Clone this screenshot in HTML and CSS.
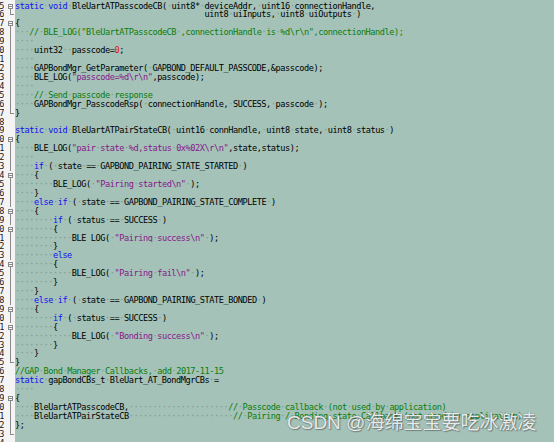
FILE: index.html
```html
<!DOCTYPE html>
<html>
<head>
<meta charset="utf-8">
<link rel="stylesheet" href="styles.css">
</head>
<body>
<div class="editor">
<div class="ln"><span class="no">4</span><span class="fd"></span><span class="cd"></span></div>
<div class="ln"><span class="no">5</span><span class="fd box"></span><span class="cd"><b class="k">static</b><i>·</i><b class="k">void</b><i>·</i>BleUartATPasscodeCB(<i>·</i>uint8*<i>·</i>deviceAddr,<i>·</i>uint16<i>·</i>connectionHandle,</span></div>
<div class="ln"><span class="no">6</span><span class="fd end"></span><span class="cd">                                        uint8<i>·</i>uiInputs,<i>·</i>uint8<i>·</i>uiOutputs<i>·</i>)</span></div>
<div class="ln"><span class="no">7</span><span class="fd box"></span><span class="cd">{</span></div>
<div class="ln"><span class="no">8</span><span class="fd bar"></span><span class="cd"><i>···</i><b class="c">//<i>·</i>BLE_LOG("BleUartATPasscodeCB<i>·</i>,connectionHandle<i>·</i>is<i>·</i>%d\r\n",connectionHandle);</b></span></div>
<div class="ln"><span class="no">9</span><span class="fd bar"></span><span class="cd"><i>····</i></span></div>
<div class="ln"><span class="no">10</span><span class="fd bar"></span><span class="cd"><i>····</i>uint32<i>··</i>passcode=<b class="n">0</b>;</span></div>
<div class="ln"><span class="no">11</span><span class="fd bar"></span><span class="cd"><i>····</i></span></div>
<div class="ln"><span class="no">12</span><span class="fd bar"></span><span class="cd"><i>····</i>GAPBondMgr_GetParameter(<i>·</i>GAPBOND_DEFAULT_PASSCODE,&amp;passcode);</span></div>
<div class="ln"><span class="no">13</span><span class="fd bar"></span><span class="cd"><i>····</i>BLE_LOG(<b class="s">"passcode=%d\r\n"</b>,passcode);</span></div>
<div class="ln"><span class="no">14</span><span class="fd bar"></span><span class="cd"><i>····</i></span></div>
<div class="ln"><span class="no">15</span><span class="fd bar"></span><span class="cd"><i>····</i><b class="c">//<i>·</i>Send<i>·</i>passcode<i>·</i>response</b></span></div>
<div class="ln"><span class="no">16</span><span class="fd bar"></span><span class="cd"><i>····</i>GAPBondMgr_PasscodeRsp(<i>·</i>connectionHandle,<i>·</i>SUCCESS,<i>·</i>passcode<i>·</i>);</span></div>
<div class="ln"><span class="no">17</span><span class="fd end"></span><span class="cd">}</span></div>
<div class="ln"><span class="no">18</span><span class="fd"></span><span class="cd"></span></div>
<div class="ln"><span class="no">19</span><span class="fd"></span><span class="cd"><b class="k">static</b><i>·</i><b class="k">void</b><i>·</i>BleUartATPairStateCB(<i>·</i>uint16<i>·</i>connHandle,<i>·</i>uint8<i>·</i>state,<i>·</i>uint8<i>·</i>status<i>·</i>)</span></div>
<div class="ln"><span class="no">20</span><span class="fd box"></span><span class="cd">{</span></div>
<div class="ln"><span class="no">21</span><span class="fd bar"></span><span class="cd"><i>····</i>BLE_LOG(<b class="s">"pair<i>·</i>state<i>·</i>%d,status<i>·</i>0x%02X\r\n"</b>,state,status);</span></div>
<div class="ln"><span class="no">22</span><span class="fd bar"></span><span class="cd"><i>····</i></span></div>
<div class="ln"><span class="no">23</span><span class="fd bar"></span><span class="cd"><i>····</i><b class="k">if</b><i>·</i>(<i>·</i>state<i>·</i>==<i>·</i>GAPBOND_PAIRING_STATE_STARTED<i>·</i>)</span></div>
<div class="ln"><span class="no">24</span><span class="fd box"></span><span class="cd"><i>····</i>{</span></div>
<div class="ln"><span class="no">25</span><span class="fd bar"></span><span class="cd"><i>········</i>BLE_LOG(<i>·</i><b class="s">"Pairing<i>·</i>started\n"</b><i>·</i>);</span></div>
<div class="ln"><span class="no">26</span><span class="fd bar"></span><span class="cd"><i>····</i>}</span></div>
<div class="ln"><span class="no">27</span><span class="fd bar"></span><span class="cd"><i>····</i><b class="k">else</b><i>·</i><b class="k">if</b><i>·</i>(<i>·</i>state<i>·</i>==<i>·</i>GAPBOND_PAIRING_STATE_COMPLETE<i>·</i>)</span></div>
<div class="ln"><span class="no">28</span><span class="fd box"></span><span class="cd"><i>····</i>{</span></div>
<div class="ln"><span class="no">29</span><span class="fd bar"></span><span class="cd"><i>········</i><b class="k">if</b><i>·</i>(<i>·</i>status<i>·</i>==<i>·</i>SUCCESS<i>·</i>)</span></div>
<div class="ln"><span class="no">30</span><span class="fd box"></span><span class="cd"><i>········</i>{</span></div>
<div class="ln"><span class="no">31</span><span class="fd bar"></span><span class="cd"><i>············</i>BLE_LOG(<i>·</i><b class="s">"Pairing<i>·</i>success\n"</b><i>·</i>);</span></div>
<div class="ln"><span class="no">32</span><span class="fd bar"></span><span class="cd"><i>········</i>}</span></div>
<div class="ln"><span class="no">33</span><span class="fd bar"></span><span class="cd"><i>········</i><b class="k">else</b></span></div>
<div class="ln"><span class="no">34</span><span class="fd box"></span><span class="cd"><i>········</i>{</span></div>
<div class="ln"><span class="no">35</span><span class="fd bar"></span><span class="cd"><i>············</i>BLE_LOG(<i>·</i><b class="s">"Pairing<i>·</i>fail\n"</b><i>·</i>);</span></div>
<div class="ln"><span class="no">36</span><span class="fd bar"></span><span class="cd"><i>········</i>}</span></div>
<div class="ln"><span class="no">37</span><span class="fd bar"></span><span class="cd"><i>····</i>}</span></div>
<div class="ln"><span class="no">38</span><span class="fd bar"></span><span class="cd"><i>····</i><b class="k">else</b><i>·</i><b class="k">if</b><i>·</i>(<i>·</i>state<i>·</i>==<i>·</i>GAPBOND_PAIRING_STATE_BONDED<i>·</i>)</span></div>
<div class="ln"><span class="no">39</span><span class="fd box"></span><span class="cd"><i>····</i>{</span></div>
<div class="ln"><span class="no">40</span><span class="fd bar"></span><span class="cd"><i>········</i><b class="k">if</b><i>·</i>(<i>·</i>status<i>·</i>==<i>·</i>SUCCESS<i>·</i>)</span></div>
<div class="ln"><span class="no">41</span><span class="fd box"></span><span class="cd"><i>········</i>{</span></div>
<div class="ln"><span class="no">42</span><span class="fd bar"></span><span class="cd"><i>············</i>BLE_LOG(<i>·</i><b class="s">"Bonding<i>·</i>success\n"</b><i>·</i>);</span></div>
<div class="ln"><span class="no">43</span><span class="fd bar"></span><span class="cd"><i>········</i>}</span></div>
<div class="ln"><span class="no">44</span><span class="fd bar"></span><span class="cd"><i>····</i>}</span></div>
<div class="ln"><span class="no">45</span><span class="fd end"></span><span class="cd">}</span></div>
<div class="ln"><span class="no">46</span><span class="fd"></span><span class="cd"><b class="c">//GAP<i>·</i>Bond<i>·</i>Manager<i>·</i>Callbacks,<i>·</i>add<i>·</i>2017-11-15</b></span></div>
<div class="ln"><span class="no">47</span><span class="fd"></span><span class="cd"><b class="k">static</b><i>·</i>gapBondCBs_t<i>·</i>BleUart_AT_BondMgrCBs<i>·</i>=</span></div>
<div class="ln"><span class="no">48</span><span class="fd"></span><span class="cd"><i>····</i></span></div>
<div class="ln"><span class="no">49</span><span class="fd box"></span><span class="cd">{</span></div>
<div class="ln"><span class="no">50</span><span class="fd bar"></span><span class="cd"><i>····</i>BleUartATPasscodeCB,<i>·····················</i><b class="c">//<i>·</i>Passcode<i>·</i>callback<i>·</i>(not<i>·</i>used<i>·</i>by<i>·</i>application)</b></span></div>
<div class="ln"><span class="no">51</span><span class="fd bar"></span><span class="cd"><i>····</i>BleUartATPairStateCB<i>······················</i><b class="c">//<i>·</i>Pairing<i>·</i>/<i>·</i>Bonding<i>·</i>state<i>·</i>Callback<i>·</i>(not<i>·</i>used<i>·</i>by<i>·</i>application)</b></span></div>
<div class="ln"><span class="no">52</span><span class="fd bar"></span><span class="cd">};</span></div>
<div class="ln"><span class="no">53</span><span class="fd end"></span><span class="cd"></span></div>
<div class="ln"><span class="no">54</span><span class="fd"></span><span class="cd"></span></div>
</div>
<div class="watermark">CSDN @海绵宝宝要吃冰激凌</div>
</body>
</html>
```
FILE: styles.css
```css
html, body {
  margin: 0;
  padding: 0;
  background: #a4c2b8;
  overflow: hidden;
}
body {
  width: 554px;
  height: 442px;
  position: relative;
}
.editor {
  margin-top: -7.4px;
  font-family: "DejaVu Sans Mono", "Liberation Mono", monospace;
  font-size: 8.6px;
  letter-spacing: -0.437px;
  color: #000;
}
.ln {
  display: flex;
  height: 8.93px;
  line-height: 8.93px;
}
.no {
  width: 4px;
  flex: none;
  display: flex;
  justify-content: flex-end;
  overflow: hidden;
  background: #f4f4f4;
  color: #1a1a1a;
  white-space: pre;
}
.fd {
  width: 11px;
  flex: none;
  background: #f4f4f4;
  position: relative;
}
.fd.bar::before,
.fd.end::before,
.fd.box::after {
  content: "";
  position: absolute;
  left: 6px;
  width: 1px;
  background: #8a8a8a;
}
.fd.bar::before {
  top: 0;
  bottom: 0;
}
.fd.end::before {
  top: 0;
  height: 5px;
}
.fd.end::after {
  content: "";
  position: absolute;
  left: 6px;
  top: 4px;
  width: 4px;
  height: 1px;
  background: #8a8a8a;
}
.fd.box::before {
  content: "";
  position: absolute;
  left: 4px;
  top: 2px;
  width: 3px;
  height: 3px;
  border: 1px solid #8a8a8a;
  background: linear-gradient(#8a8a8a, #8a8a8a) center / 3px 1px no-repeat #fdfdfd;
}
.fd.box::after {
  top: 7px;
  bottom: 0;
}
.cd {
  flex: 1;
  white-space: pre;
  background: #a4c2b8;
}
.cd i {
  font-style: normal;
  color: #76998e;
}
.cd b {
  font-weight: normal;
}
.k { color: #1010f0; }
.c { color: #0a7d0a; }
.s { color: #86168a; }
.n { color: #e01010; }
.c i, .s i { color: #76998e; }
.watermark {
  position: absolute;
  left: 287px;
  top: 412px;
  font-family: "Liberation Sans", "Noto Sans CJK SC", sans-serif;
  font-size: 19px;
  line-height: 21px;
  color: rgba(248, 248, 248, 0.93);
  text-shadow: 0 0 1px rgba(60, 60, 60, 0.7), 1px 1px 1px rgba(60, 60, 60, 0.45);
  white-space: nowrap;
}
```
